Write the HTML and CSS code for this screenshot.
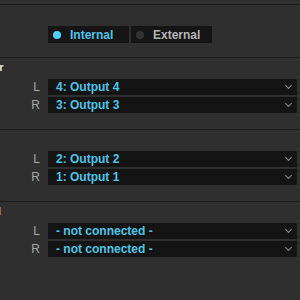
FILE: index.html
```html
<!DOCTYPE html>
<html>
  <head>
    <title>Output Routing</title>
    <link rel="stylesheet" href="styles.css">
  </head>
  <body>
    <div class="panel">
      <div class="mode">
        <div class="mode-btn active">
          <span class="dot"></span>
          Internal
        </div>
        <div class="mode-btn">
          <span class="dot"></span>
          External
        </div>
      </div>

      <div class="section">
        <div class="section-head">Output Monitor</div>
        <div class="row">
          <span class="ch">L</span>
          <div class="select">4: Output 4<span class="chev"></span></div>
        </div>
        <div class="row">
          <span class="ch">R</span>
          <div class="select">3: Output 3<span class="chev"></span></div>
        </div>
      </div>

      <div class="section">
        <div class="section-head">Output Master</div>
        <div class="row">
          <span class="ch">L</span>
          <div class="select">2: Output 2<span class="chev"></span></div>
        </div>
        <div class="row">
          <span class="ch">R</span>
          <div class="select">1: Output 1<span class="chev"></span></div>
        </div>
      </div>

      <div class="section">
        <div class="section-head">Output Record</div>
        <div class="row">
          <span class="ch">L</span>
          <div class="select">- not connected -<span class="chev"></span></div>
        </div>
        <div class="row">
          <span class="ch">R</span>
          <div class="select">- not connected -<span class="chev"></span></div>
        </div>
      </div>
    </div>
  </body>
</html>
```

FILE: styles.css
```css
html,
body {
  height: 100%;
}
body {
  margin: 0;
  background-color: #2f2f2f;
  font-family: 'Liberation Sans', Arial, sans-serif;
  font-size: 12px;
  overflow: hidden;
}

.panel {
  padding-top: 4px;
}

.mode {
  display: flex;
  gap: 2px;
  height: 53px;
  padding-left: 48px;
  padding-top: 21px;
  box-sizing: border-box;
  border-top: 1px solid #1c1c1c;
}

.mode-btn {
  width: 81px;
  height: 17px;
  display: flex;
  align-items: center;
  gap: 9px;
  padding-left: 5px;
  box-sizing: border-box;
  background-color: #151515;
  color: #b4b4b4;
  font-weight: bold;
  font-size: 12px;
}

.mode-btn .dot {
  width: 8px;
  height: 8px;
  border-radius: 50%;
  background-color: #343434;
}

.mode-btn.active {
  color: #4fc4e6;
}

.mode-btn.active .dot {
  background-color: #4fd0f6;
}

.section {
  height: 72px;
  box-sizing: border-box;
  border-top: 1px solid #1c1c1c;
  position: relative;
  padding-top: 21px;
}

.section-head {
  position: absolute;
  top: 3px;
  left: -76px;
  color: #e6e6e6;
  font-weight: bold;
  font-size: 11px;
  white-space: nowrap;
}

.row {
  display: flex;
  align-items: center;
  height: 16px;
  margin-bottom: 2px;
}

.ch {
  width: 40px;
  text-align: right;
  padding-right: 8px;
  box-sizing: border-box;
  width: 48px;
  color: #a8a8a8;
  font-size: 12px;
}

.select {
  flex: 1;
  height: 16px;
  margin-right: 3px;
  display: flex;
  align-items: center;
  padding-left: 8px;
  background-color: #141414;
  color: #4fc4e6;
  font-weight: bold;
  font-size: 12px;
  position: relative;
}

.chev {
  position: absolute;
  right: 6px;
  top: 4px;
  width: 4px;
  height: 4px;
  border-right: 1.5px solid #8a8a8a;
  border-bottom: 1.5px solid #8a8a8a;
  transform: rotate(45deg);
}
```
